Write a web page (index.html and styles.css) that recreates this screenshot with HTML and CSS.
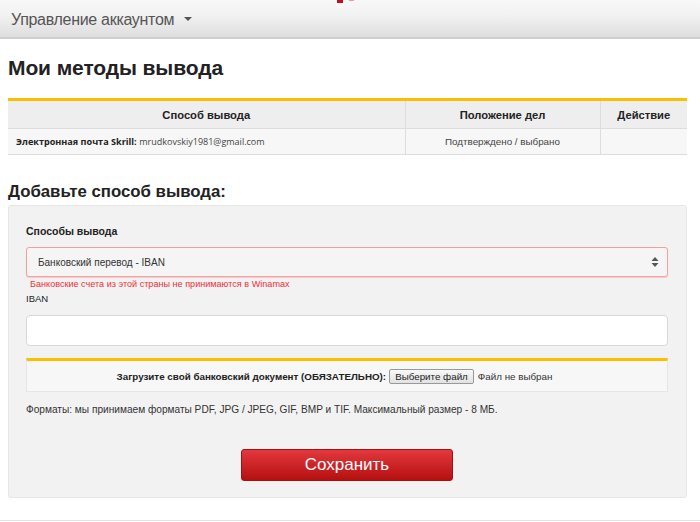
FILE: index.html
```html
<!DOCTYPE html>
<html lang="ru">
<head>
<meta charset="utf-8">
<link rel="stylesheet" href="styles.css">
</head>
<body>
<header class="topbar">
  <span class="logo-bit"></span>
  <div class="menu">Управление аккаунтом <span class="caret"></span></div>
</header>
<main class="page">
  <h1 class="title">Мои методы вывода</h1>
  <table class="methods">
    <thead>
      <tr><th class="c1">Способ вывода</th><th class="c2">Положение дел</th><th class="c3">Действие</th></tr>
    </thead>
    <tbody>
      <tr><td class="c1 left"><b>Электронная почта Skrill:</b> <span class="mail">mrudkovskiy1981@gmail.com</span></td><td class="c2">Подтверждено / выбрано</td><td class="c3"></td></tr>
    </tbody>
  </table>
  <h2 class="subtitle">Добавьте способ вывода:</h2>
  <section class="panel">
    <div class="label">Способы вывода</div>
    <div class="select">
      <span>Банковский перевод - IBAN</span>
      <svg class="arrows" width="8" height="12" viewBox="0 0 8 12"><path d="M4 1 L7.5 5 H0.5 Z M4 11 L0.5 7 H7.5 Z" fill="#555"/></svg>
    </div>
    <div class="error">Банковские счета из этой страны не принимаются в Winamax</div>
    <div class="label small">IBAN</div>
    <div class="input"></div>
    <div class="upload">
      <b>Загрузите свой банковский документ (ОБЯЗАТЕЛЬНО):</b>
      <span class="filebtn">Выберите файл</span>
      <span class="nofile">Файл не выбран</span>
    </div>
    <p class="formats">Форматы: мы принимаем форматы PDF, JPG / JPEG, GIF, BMP и TIF. Максимальный размер - 8 МБ.</p>
    <div class="actions"><button class="save">Сохранить</button></div>
  </section>
  <div class="bottomline"></div>
</main>
</body>
</html>
```
FILE: styles.css
```css
* { box-sizing: border-box; }
html, body { margin: 0; padding: 0; background: #fff; }
body { font-family: "Liberation Sans", Arial, sans-serif; color: #222; width: 700px; height: 522px; overflow: hidden; }

.topbar {
  position: relative;
  height: 39px;
  background: linear-gradient(#f8f8f8, #f2f2f2 40%, #dedede);
  border-bottom: 2px solid #cfcfcf;
  padding: 11px 0 0 11px;
}
.logo-bit { position: absolute; left: 337px; top: 0; width: 6px; height: 3px; background: #c0101a; }
.logo-bit::after { content: ""; position: absolute; left: 12px; top: 0; width: 5px; height: 1px; background: #e8a0a0; }
.menu { font-size: 16px; line-height: 18px; color: #555; letter-spacing: -0.3px; }
.caret { display: inline-block; width: 0; height: 0; border-left: 4px solid transparent; border-right: 4px solid transparent; border-top: 4px solid #555; vertical-align: middle; margin-left: 6px; margin-top: -3px; }

.page { padding: 0 13px 0 8px; }
.title { font-size: 21px; font-weight: bold; margin: 17px 0 0; line-height: 24px; color: #222; letter-spacing: -0.1px; }

.methods {
  margin-top: 18px;
  width: 679px;
  border-collapse: collapse;
  border-top: 3px solid #f9c000;
  font-size: 11.2px;
}
.methods th {
  background: #eee;
  height: 29px;
  font-weight: bold;
  color: #222;
  border-left: 1px solid #ddd;
  border-bottom: 1px solid #ddd;
}
.methods th:first-child, .methods td:first-child { border-left: none; }
.methods td {
  background: #f7f7f7;
  height: 26px;
  text-align: center;
  font-size: 9.8px;
  color: #444;
  border-left: 1px solid #ddd;
  border-bottom: 1px solid #ddd;
}
.methods td.left { text-align: left; padding-left: 8px; font-family: "Open Sans", sans-serif; }
.methods td.left b { font-size: 9.1px; color: #222; font-weight: 700; }
.mail { font-size: 9px; color: #444; }
.c1 { width: 397px; }
.c2 { width: 195px; }
.c3 { width: 87px; }

.subtitle { font-size: 16.8px; font-weight: bold; margin: 26px 0 0; line-height: 22px; color: #222; }

.panel {
  margin-top: 2px;
  width: 679px;
  height: 293px;
  background: #f2f2f2;
  border: 1px solid #e6e6e6;
  border-radius: 3px;
  padding: 18px 18px 0 17px;
}
.label { font-size: 10.5px; font-weight: bold; color: #222; line-height: 14px; }
.label.small { font-weight: normal; font-size: 9.5px; margin-top: 2px; }
.select {
  margin-top: 9px;
  height: 30px;
  border: 1px solid #f4a0a0;
  border-radius: 3px;
  background: #f5f5f5;
  box-shadow: 0 1px 1px rgba(240,120,120,0.3);
  display: flex;
  align-items: center;
  justify-content: space-between;
  padding: 0 8px 0 11px;
  font-size: 10px;
  color: #333;
}
.arrows { display: block; }
.error { color: #f0303a; font-size: 9.1px; margin: 1px 0 0 4px; line-height: 12px; }
.input {
  margin-top: 9px;
  height: 31px;
  background: #fff;
  border: 1px solid #d8d8d8;
  border-radius: 4px;
}
.upload {
  margin-top: 12px;
  height: 34px;
  border-top: 3px solid #f9c000;
  background: #f7f7f7;
  border-left: 1px solid #e6e6e6;
  border-right: 1px solid #e6e6e6;
  border-bottom: 1px solid #e6e6e6;
  display: flex;
  align-items: center;
  justify-content: center;
  font-size: 9.8px;
  color: #222;
  padding-right: 25px;
}
.upload b { font-weight: bold; }
.filebtn {
  margin-left: 3px;
  border: 1px solid #999;
  background: linear-gradient(#f8f8f8, #e2e2e2);
  padding: 1px 5px;
  font-size: 9.8px;
  color: #222;
  border-radius: 2px;
}
.nofile { margin-left: 4px; font-size: 9.8px; color: #333; }
.formats { font-size: 10.15px; color: #333; margin: 11px 0 0; line-height: 14px; }
.actions { margin-top: 32px; padding-left: 215px; }
.save {
  width: 212px;
  height: 32px;
  border: 1px solid #a81010;
  border-radius: 3px;
  background: linear-gradient(#e2383e, #b51010);
  color: #fff;
  font-family: "Liberation Sans", Arial, sans-serif;
  font-size: 17px;
  cursor: pointer;
}
.bottomline { margin-top: 22px; width: 700px; margin-left: -8px; border-top: 1px solid #e2e2e2; }
```
